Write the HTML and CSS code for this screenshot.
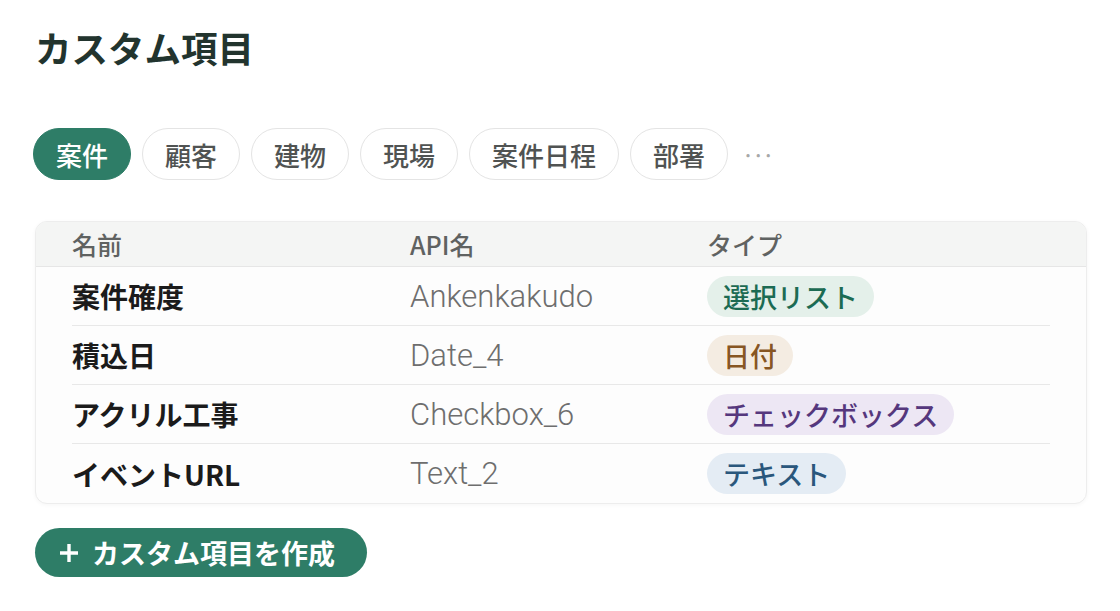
FILE: index.html
```html
<!DOCTYPE html>
<html lang="ja">
<head>
<meta charset="utf-8">
<title>カスタム項目</title>
<link rel="stylesheet" href="styles.css">
</head>
<body>
<main class="page">
  <h1 class="title">カスタム項目</h1>
  <nav class="tabs">
    <span class="tab tab-active">案件</span>
    <span class="tab">顧客</span>
    <span class="tab">建物</span>
    <span class="tab">現場</span>
    <span class="tab">案件日程</span>
    <span class="tab">部署</span>
    <span class="more">···</span>
  </nav>
  <section class="card">
    <div class="thead">
      <div class="th">名前</div>
      <div class="th">API名</div>
      <div class="th">タイプ</div>
    </div>
    <div class="tbody">
      <div class="tr">
        <div class="td name">案件確度</div>
        <div class="td api">Ankenkakudo</div>
        <div class="td"><span class="badge b-green">選択リスト</span></div>
      </div>
      <div class="tr">
        <div class="td name">積込日</div>
        <div class="td api">Date_4</div>
        <div class="td"><span class="badge b-brown">日付</span></div>
      </div>
      <div class="tr">
        <div class="td name">アクリル工事</div>
        <div class="td api">Checkbox_6</div>
        <div class="td"><span class="badge b-purple">チェックボックス</span></div>
      </div>
      <div class="tr">
        <div class="td name">イベントURL</div>
        <div class="td api">Text_2</div>
        <div class="td"><span class="badge b-blue">テキスト</span></div>
      </div>
    </div>
  </section>
  <button class="create" type="button"><svg class="plus" width="22" height="22" viewBox="0 0 22 22" aria-hidden="true"><path d="M11 2v18M2 11h18" stroke="#ffffff" stroke-width="3.4" stroke-linecap="butt" fill="none"/></svg>カスタム項目を作成</button>
</main>
</body>
</html>
```

FILE: styles.css
```css
* { box-sizing: border-box; }
html, body { margin: 0; padding: 0; background: #ffffff; }
body {
  font-family: "Noto Sans CJK JP", "Noto Sans", sans-serif;
  color: #1b1b1b;
}
.page {
  padding: 26px 34px 0 35px;
  width: 1120px;
}
.title {
  margin: 0;
  font-size: 36.5px;
  line-height: 44px;
  font-weight: 700;
  color: #22342e;
}
.tabs {
  display: flex;
  align-items: center;
  gap: 11px;
  margin-top: 58px;
  margin-left: -2px;
}
.tab {
  display: flex;
  align-items: center;
  height: 52px;
  padding: 0 22px;
  border: 1.5px solid #e4e4e4;
  border-radius: 26px;
  background: #fff;
  font-size: 26px;
  font-weight: 500;
  color: #505352;
}
.tab-active {
  background: #2e7d67;
  border-color: #2e7d67;
  color: #ffffff;
}
.more {
  margin-left: 4px;
  font-size: 17px;
  font-weight: 700;
  color: #a8a8a8;
  letter-spacing: 0;
}
.card {
  margin-top: 41px;
  width: 1052px;
  border: 1px solid #ededed;
  border-radius: 12px;
  background: #fdfdfd;
  box-shadow: 0 1px 4px rgba(0, 0, 0, 0.04);
  overflow: hidden;
}
.thead {
  display: grid;
  grid-template-columns: 338px 297px 1fr;
  align-items: center;
  height: 45px;
  padding: 0 36px;
  background: #f4f5f4;
  border-bottom: 1.5px solid #e6e6e6;
}
.th {
  font-size: 25px;
  font-weight: 500;
  color: #5f6261;
}
.tbody {
  padding: 0 36px;
}
.tr {
  display: grid;
  grid-template-columns: 338px 297px 1fr;
  align-items: center;
  height: 59px;
  border-bottom: 1.5px solid #e8e8e8;
}
.tr:last-child {
  border-bottom: none;
}
.name {
  font-size: 28px;
  font-weight: 700;
  color: #1b1b1b;
}
.api {
  font-family: Roboto, "Liberation Sans", sans-serif;
  font-size: 31px;
  font-weight: 300;
  color: #6e6e6e;
}
.badge {
  display: inline-flex;
  align-items: center;
  height: 41px;
  padding: 0 16px;
  border-radius: 21px;
  font-size: 27px;
  font-weight: 500;
}
.b-green { background: #e4f0ea; color: #1c6b53; }
.b-brown { background: #f4ece2; color: #875623; }
.b-purple { background: #ede7f4; color: #55377d; }
.b-blue { background: #e4ecf4; color: #2a577c; }
.create {
  display: flex;
  align-items: center;
  margin-top: 24px;
  height: 49px;
  padding: 0 32px 0 23px;
  border: none;
  border-radius: 25px;
  background: #2e7d67;
  color: #ffffff;
  font-family: "Noto Sans CJK JP", "Noto Sans", sans-serif;
  font-size: 27px;
  font-weight: 700;
  cursor: pointer;
}
.plus {
  display: block;
  margin-right: 12px;
  flex: none;
}
```
